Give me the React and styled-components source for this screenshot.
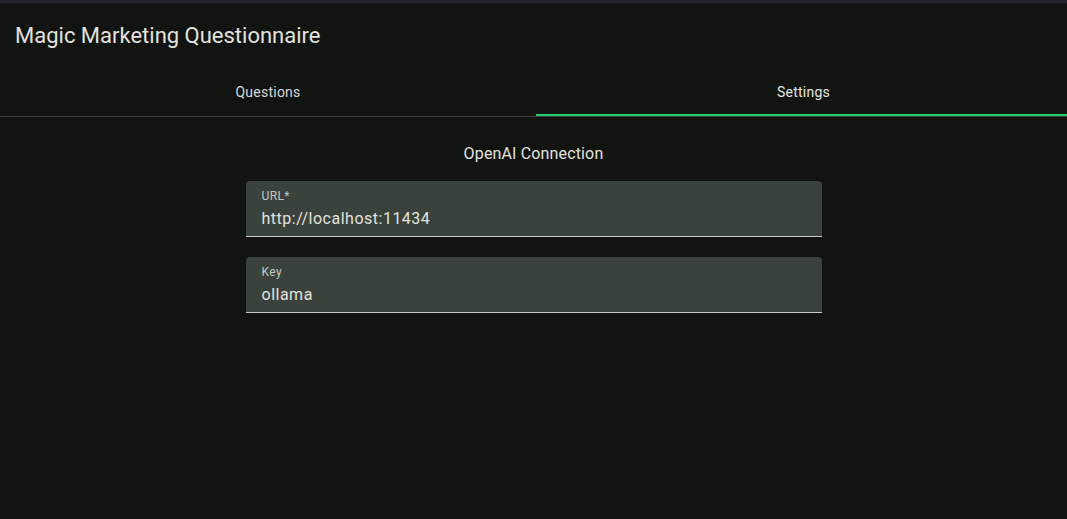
import styled, { createGlobalStyle } from "styled-components";

const GlobalStyle = createGlobalStyle`
  html, body {
    margin: 0;
    background-color: #121412;
    font-family: Roboto, "Noto Sans", sans-serif;
    color: #e1e3de;
  }
`;

const Page = styled.div`
  min-height: 519px;
  display: flex;
  flex-direction: column;
`;

const TopStrip = styled.div`
  height: 3px;
  background-color: #25242c;
`;

const Title = styled.h1`
  margin: 0;
  padding: 19px 15px 18px;
  font-size: 22px;
  line-height: 28px;
  font-weight: 400;
  color: #e2e3de;
`;

const TabBar = styled.div`
  display: flex;
  border-bottom: 1px solid #3c3f3b;
`;

const Tab = styled.div`
  position: relative;
  flex: ${(props) => (props.active ? "1" : "0 0 536px")};
  height: 48px;
  display: flex;
  align-items: center;
  justify-content: center;
  padding-left: ${(props) => (props.active ? "4px" : "0")};
  font-size: 14px;
  font-weight: 400;
  letter-spacing: 0.25px;
  color: ${(props) => (props.active ? "#e6e7e2" : "#d6d9d3")};
  cursor: pointer;

  &::after {
    content: "";
    display: ${(props) => (props.active ? "block" : "none")};
    position: absolute;
    left: 0;
    right: 0;
    bottom: 0;
    height: 2px;
    background-color: #20d56e;
  }
`;

const Content = styled.div`
  width: 576px;
  margin: 0 auto;
  padding-top: 25px;
  display: flex;
  flex-direction: column;
  gap: 20px;
`;

const SectionTitle = styled.h2`
  margin: 0 0 -5px;
  text-align: center;
  font-size: 16px;
  line-height: 24px;
  font-weight: 400;
  letter-spacing: 0.15px;
  color: #e2e3de;
`;

const Field = styled.label`
  display: flex;
  flex-direction: column;
  box-sizing: content-box;
  height: 48px;
  padding: 7px 16px 0;
  background-color: #3a423c;
  border-radius: 4px 4px 0 0;
  border-bottom: 1px solid #c6ccc4;
`;

const FieldLabel = styled.span`
  font-size: 12px;
  line-height: 16px;
  letter-spacing: 0.4px;
  color: #c3c8c0;
`;

const FieldValue = styled.span`
  margin-top: 3px;
  font-size: 16px;
  line-height: 24px;
  letter-spacing: 0.5px;
  color: #e2e3de;
`;

const fields = [
  { label: "URL*", value: "http://localhost:11434" },
  { label: "Key", value: "ollama" },
];

function App() {
  return (
    <Page>
      <GlobalStyle />
      <TopStrip />
      <Title>Magic Marketing Questionnaire</Title>
      <TabBar>
        <Tab>Questions</Tab>
        <Tab active>Settings</Tab>
      </TabBar>
      <Content>
        <SectionTitle>OpenAI Connection</SectionTitle>
        {fields.map((field) => (
          <Field key={field.label}>
            <FieldLabel>{field.label}</FieldLabel>
            <FieldValue>{field.value}</FieldValue>
          </Field>
        ))}
      </Content>
    </Page>
  );
}

export default App;
